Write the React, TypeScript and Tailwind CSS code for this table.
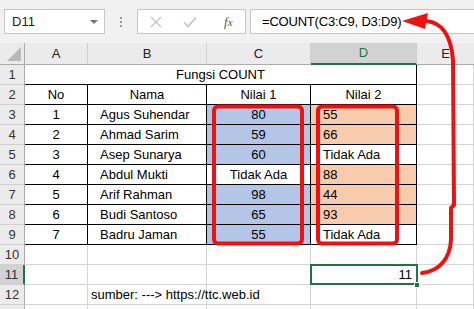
import React from "react"

const data = [
  { no: 1, name: "Agus Suhendar", n1: "80", n2: "55" },
  { no: 2, name: "Ahmad Sarim", n1: "59", n2: "66" },
  { no: 3, name: "Asep Sunarya", n1: "60", n2: "Tidak Ada" },
  { no: 4, name: "Abdul Mukti", n1: "Tidak Ada", n2: "88" },
  { no: 5, name: "Arif Rahman", n1: "98", n2: "44" },
  { no: 6, name: "Budi Santoso", n1: "65", n2: "93" },
  { no: 7, name: "Badru Jaman", n1: "55", n2: "Tidak Ada" },
]

function RowHead({ n, active }: { n?: number; active?: boolean }) {
  return (
    <div
      className={`flex items-center justify-center border-b border-b-[#d0d0d0] border-r text-[13px] text-[#333] ${
        active ? "bg-[#d2d2d2] border-r-2 border-r-[#217346]" : "bg-[#ebebeb] border-r-[#ababab]"
      }`}
    >
      {n}
    </div>
  )
}

function Cell({ children, className = "" }: { children?: React.ReactNode; className?: string }) {
  return <div className={`flex items-center border-r border-b whitespace-nowrap ${className}`}>{children}</div>
}

const grid = "border-r-[#d4d4d4] border-b-[#d4d4d4]"
const black = "border-r-black border-b-black"

export default function App() {
  return (
    <div className="relative w-[474px] h-[309px] overflow-hidden bg-white text-black" style={{ fontFamily: '"Liberation Sans", Arial, sans-serif' }}>
      {/* formula bar */}
      <div className="h-[43px] bg-[#f1f1f1] flex items-start pt-[9px]">
        <div className="ml-[4px] w-[101px] h-[25px] bg-white border border-[#c6c6c6] flex items-center justify-between pl-[7px] pr-[6px] text-[13px] text-[#222]">
          <span>D11</span>
          <span className="w-0 h-0 border-l-[4px] border-r-[4px] border-t-[4px] border-l-transparent border-r-transparent border-t-[#777]" />
        </div>
        <div className="w-[32px] h-[25px] flex flex-col items-center justify-center gap-[2px]">
          <span className="w-[2px] h-[2px] bg-[#9a9a9a]" />
          <span className="w-[2px] h-[2px] bg-[#9a9a9a]" />
          <span className="w-[2px] h-[2px] bg-[#9a9a9a]" />
        </div>
        <div className="w-[109px] h-[25px] bg-white border border-[#c6c6c6] flex items-center pl-[12px] gap-[21px]">
          <svg width="12" height="12" viewBox="0 0 12 12">
            <path d="M1 1L11 11M11 1L1 11" stroke="#c3c3c3" strokeWidth="1.3" fill="none" />
          </svg>
          <svg width="14" height="12" viewBox="0 0 14 12">
            <path d="M1 6.5L5 10.5L13 1.5" stroke="#c3c3c3" strokeWidth="1.6" fill="none" />
          </svg>
          <span className="text-[13px] italic text-[#555] ml-[6px]" style={{ fontFamily: '"Liberation Serif", serif' }}>
            f<span className="text-[11px]">x</span>
          </span>
        </div>
        <div className="ml-[4px] flex-1 h-[25px] bg-white border border-r-0 border-[#c6c6c6] flex items-center pl-[11px] text-[13px] tracking-[-0.2px] text-black">
          =COUNT(C3:C9, D3:D9)
        </div>
      </div>

      {/* sheet */}
      <div className="grid grid-cols-[25px_63px_119px_104px_106px_57px] grid-rows-[22px] auto-rows-[20px] text-[13px]">
        {/* column headers */}
        <div className="relative bg-[#ebebeb] border-r border-b border-[#ababab]">
          <div className="absolute right-[3px] bottom-[3px] w-0 h-0" style={{ borderBottom: "14px solid #b9b9b9", borderLeft: "14px solid transparent" }} />
        </div>
        {["A", "B", "C"].map((c) => (
          <div key={c} className="flex items-center justify-center bg-[#ebebeb] border-r border-r-[#d0d0d0] border-b border-b-[#ababab] text-[#222]">
            {c}
          </div>
        ))}
        <div className="flex items-center justify-center bg-[#d2d2d2] border-r border-r-[#d0d0d0] border-b-2 border-b-[#217346] text-[#217346]">D</div>
        <div className="flex items-center justify-center bg-[#ebebeb] border-b border-b-[#ababab] text-[#222]">E</div>

        {/* row 1 */}
        <RowHead n={1} />
        <Cell className={`col-span-4 justify-center ${black}`}>Fungsi COUNT</Cell>
        <Cell className={grid} />

        {/* row 2 */}
        <RowHead n={2} />
        <Cell className={`justify-center ${black}`}>No</Cell>
        <Cell className={`justify-center ${black}`}>Nama</Cell>
        <Cell className={`justify-center ${black}`}>Nilai 1</Cell>
        <Cell className={`justify-center ${black}`}>Nilai 2</Cell>
        <Cell className={grid} />

        {data.map((d, i) => (
          <React.Fragment key={d.no}>
            <RowHead n={i + 3} />
            <Cell className={`justify-center ${black}`}>{d.no}</Cell>
            <Cell className={`pl-[12px] ${black}`}>{d.name}</Cell>
            <Cell className={`justify-center ${black} ${d.n1 === "Tidak Ada" ? "bg-white" : "bg-[#b4c6e7]"}`}>{d.n1}</Cell>
            <Cell className={`pl-[12px] ${black} ${d.n2 === "Tidak Ada" ? "bg-white" : "bg-[#f8cbad]"}`}>{d.n2}</Cell>
            <Cell className={grid} />
          </React.Fragment>
        ))}

        {/* row 10 */}
        <RowHead n={10} />
        <Cell className={grid} />
        <Cell className={grid} />
        <Cell className={grid} />
        <Cell className={grid} />
        <Cell className={grid} />

        {/* row 11 */}
        <RowHead n={11} active />
        <Cell className={grid} />
        <Cell className={grid} />
        <Cell className={grid} />
        <Cell className={`justify-end pr-[4px] ${grid}`}>11</Cell>
        <Cell className={grid} />

        {/* row 12 */}
        <RowHead n={12} />
        <Cell className={grid} />
        <Cell className={`pl-[3px] overflow-visible ${grid}`}>sumber: ---&gt; https://ttc.web.id</Cell>
        <Cell className={grid} />
        <Cell className={grid} />
        <Cell className={grid} />

        {/* row 13 (partly visible) */}
        <RowHead />
        <Cell className={grid} />
        <Cell className={grid} />
        <Cell className={grid} />
        <Cell className={grid} />
        <Cell className={grid} />
      </div>

      {/* selected cell D11 */}
      <div className="absolute left-[310px] top-[264px] w-[108px] h-[21px] border-2 border-[#217346]" />
      <div className="absolute left-[414px] top-[282px] w-[6px] h-[6px] bg-[#217346] border border-white" />

      {/* annotations */}
      <svg className="absolute inset-0 pointer-events-none" width="474" height="309" viewBox="0 0 474 309">
        <rect x="214" y="106.5" width="88" height="137" rx="4" fill="none" stroke="#ee1111" strokeWidth="4" />
        <rect x="318" y="106.5" width="79" height="137" rx="4" fill="none" stroke="#ee1111" strokeWidth="4" />
        <path
          d="M426 21 C441 22 451 35 453 60 L454 205 L451 208 L451 240 C450 258 440 271 422 273"
          fill="none"
          stroke="#ee1111"
          strokeWidth="4"
          strokeLinecap="round"
          strokeLinejoin="round"
        />
        <polygon points="402,21 428,13 425,29" fill="#ee1111" />
      </svg>
    </div>
  )
}
